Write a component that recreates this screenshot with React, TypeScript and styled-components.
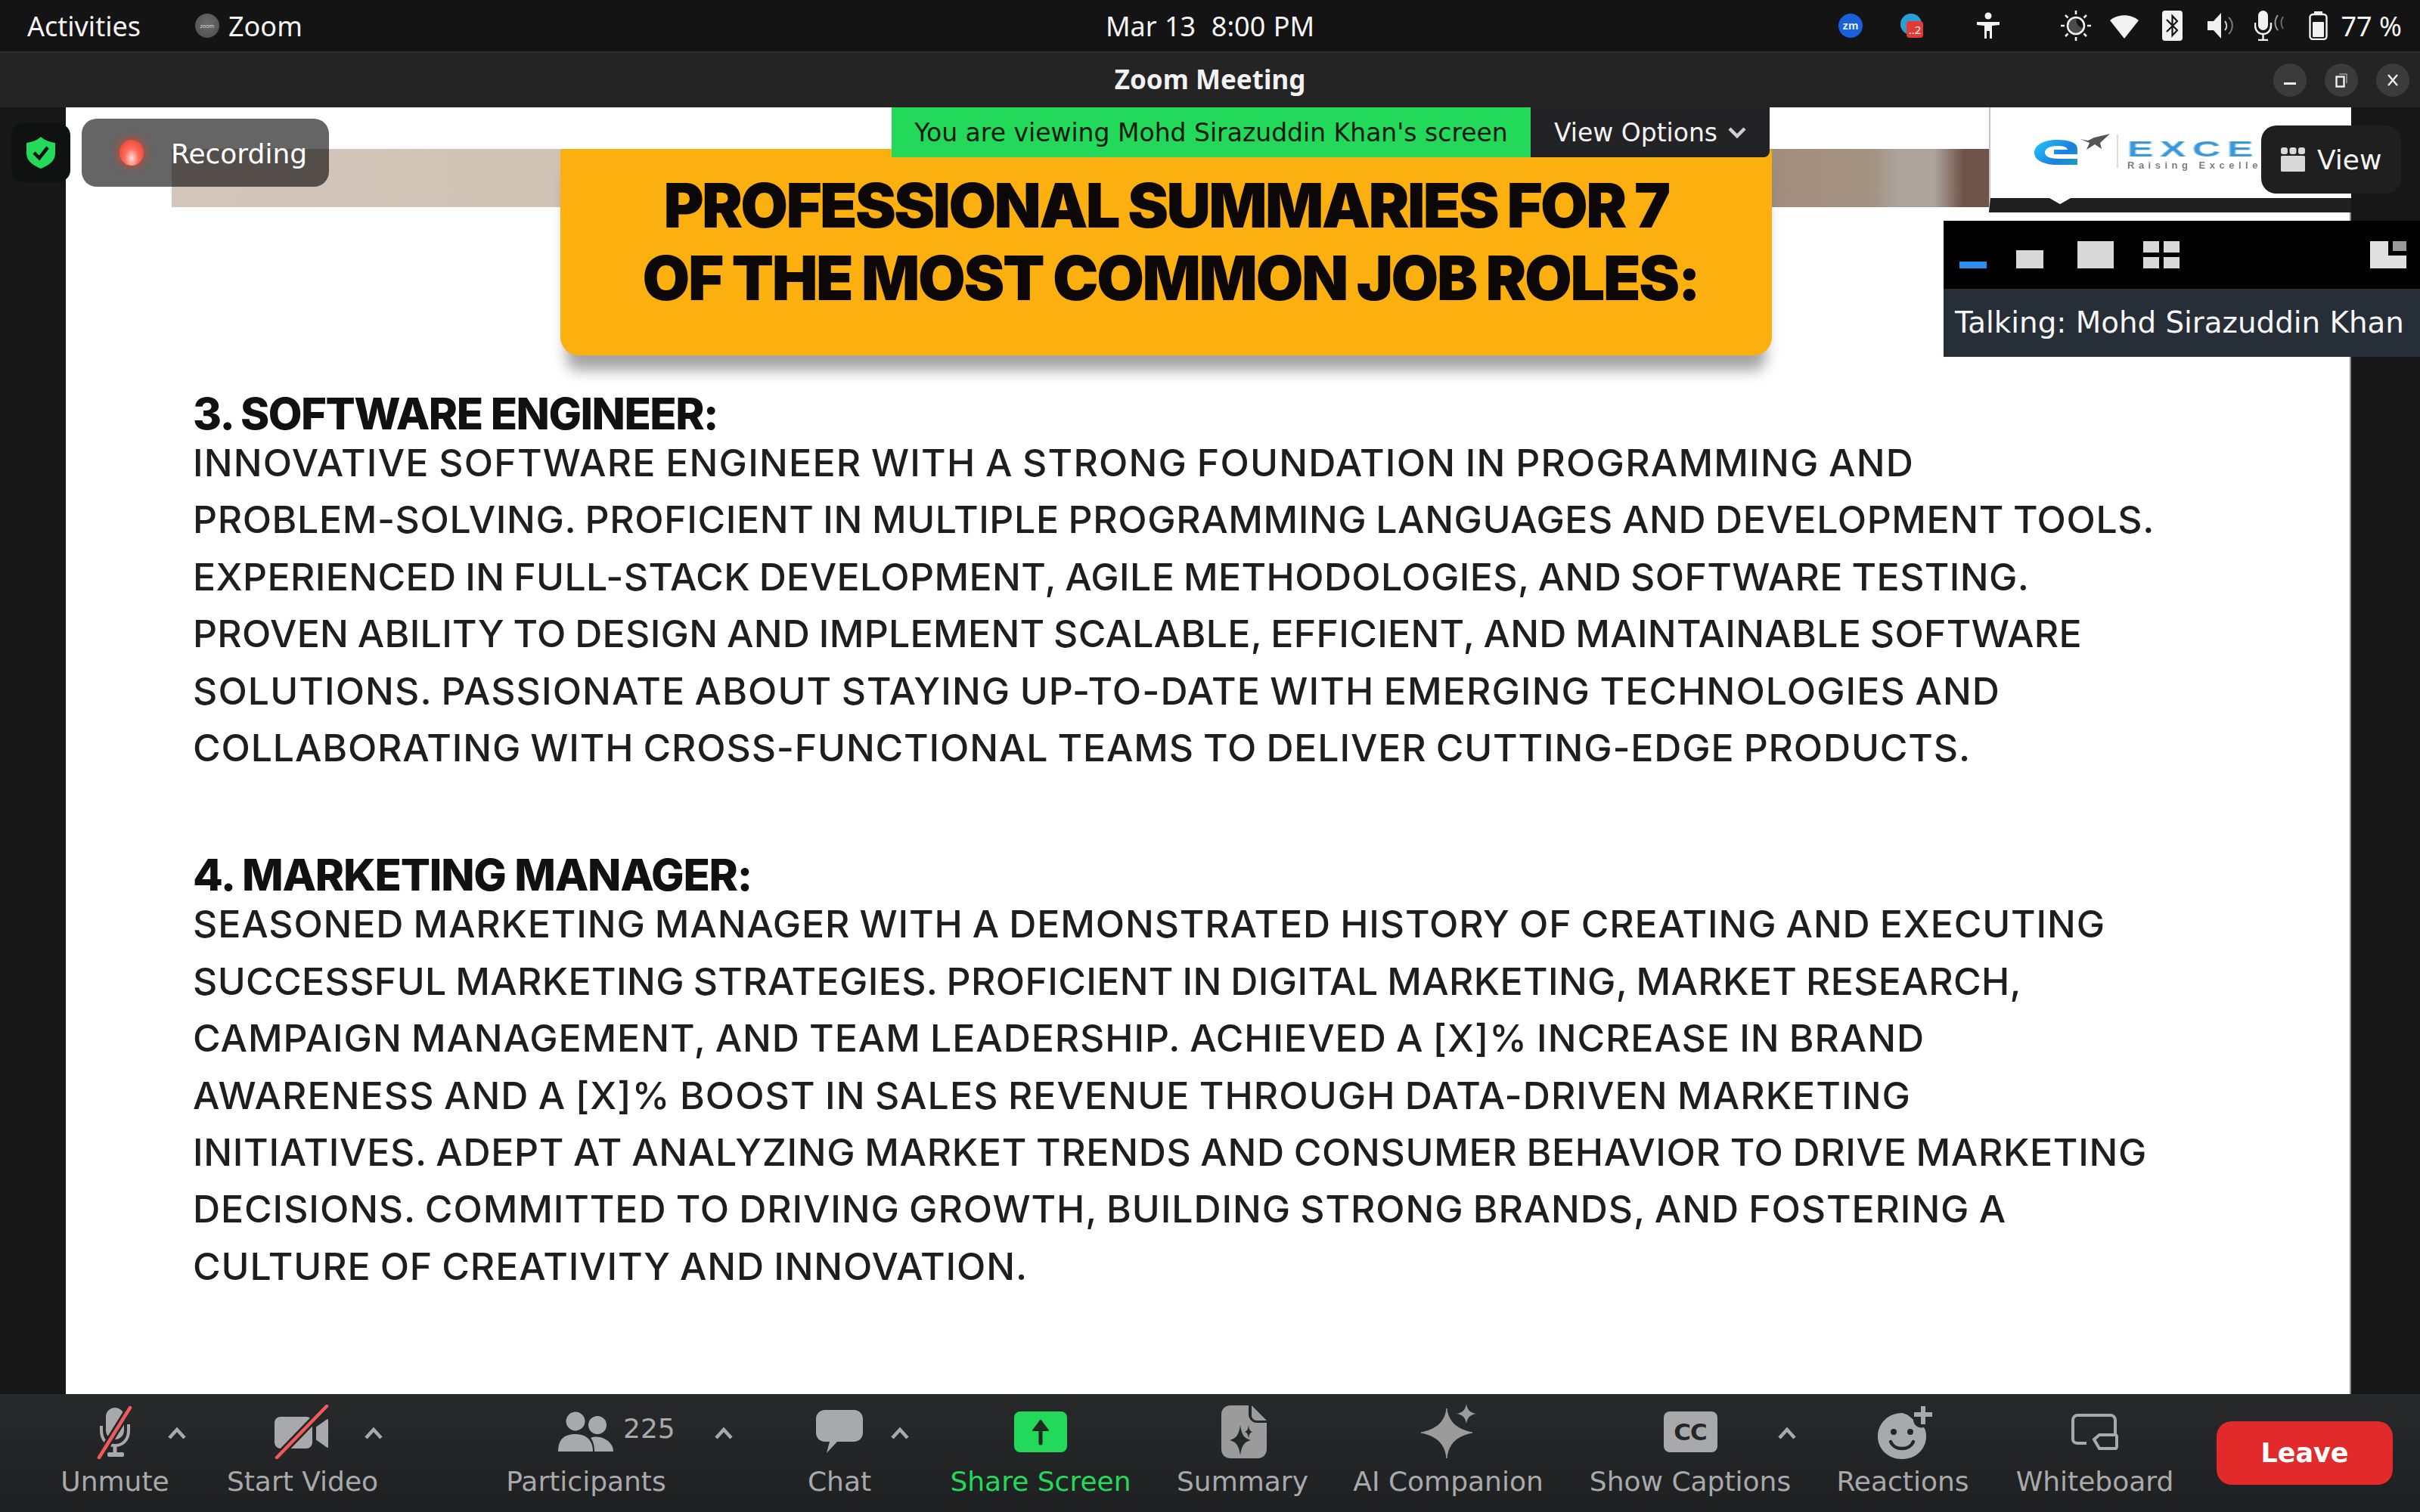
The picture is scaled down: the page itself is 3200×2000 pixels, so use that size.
import React, { useLayoutEffect, useRef } from "react";
import styled, { createGlobalStyle } from "styled-components";

const Global = createGlobalStyle`
  html, body { margin: 0; padding: 0; background: #141414; }
  * { box-sizing: border-box; }
`;

const UI = `"DejaVu Sans", "Liberation Sans", sans-serif`;
const SYS = `"Noto Sans", "Open Sans", sans-serif`;
const SLIDE = `Inter, "Open Sans", sans-serif`;

const Screen = styled.div`
  width: 3200px; height: 2000px; overflow: hidden;
  display: flex; flex-direction: column; background: #171717;
`;

/* ---------- GNOME top bar ---------- */
const TopBar = styled.header`
  height: 68px; flex: none; background: #141414; color: #f4f4f4;
  display: grid; grid-template-columns: 1fr auto 1fr; align-items: center;
  font-family: ${SYS}; font-size: 36px;
`;
const TopLeft = styled.div`display: flex; align-items: center; padding-left: 36px;`;
const AppDot = styled.span`
  width: 32px; height: 32px; border-radius: 50%; margin-left: 72px; margin-right: 12px;
  background: radial-gradient(circle at 50% 40%, #6c6c6c, #4b4b4b);
  color: #ddd; font-size: 7px; display: flex; align-items: center; justify-content: center;
`;
const Clock = styled.div`white-space: pre; word-spacing: 1px;`;
const Tray = styled.div`display: flex; align-items: center; justify-content: flex-end; padding-right: 24px;`;
const Slot = styled.span<{ $ml: number }>`
  margin-left: ${(p) => p.$ml}px; display: flex; align-items: center;
`;

/* ---------- title bar ---------- */
const TitleBar = styled.div`
  height: 74px; flex: none; background: #242424; border-top: 2px solid #2e2e2e;
  display: grid; grid-template-columns: 1fr auto 1fr; align-items: center;
  color: #f2f2f2; font-family: ${SYS}; font-size: 35px; font-weight: 700;
`;
const WinTitle = styled.span`grid-column: 2; margin-top: -4px;`;
const WinControls = styled.div`
  grid-column: 3; display: flex; justify-content: flex-end; gap: 24px; padding-right: 14px;
`;
const WinBtn = styled.span`
  width: 44px; height: 44px; border-radius: 50%; background: #3b3b3b;
  display: flex; align-items: center; justify-content: center;
`;

/* ---------- meeting stage ---------- */
const Stage = styled.main`
  position: relative; flex: 1; min-height: 0; display: flex; background: #171717;
`;
const Gutter = styled.div<{ $w: number }>`width: ${(p) => p.$w}px; flex: none; background: #171717;`;
const Slide = styled.section`
  flex: 1; background: #fff; padding-top: 55px; color: #1e1e1e; font-family: ${SLIDE};
  border-right: 2px solid #8a8a8a;
  > * { filter: blur(0.5px); }
`;
const BannerRow = styled.div`
  height: 273px; padding-left: 654px;
  background: linear-gradient(90deg, #d4c6ba 0, #d1c2b6 21%, #a08d7d 88%, #a39181 93.5%, #aca39b 95%, #aca39b 97%, #6e5448 98.6%, #6e5448 100%) no-repeat 140px 0 / 2403px 77px;
`;
const Banner = styled.div`
  width: 1602px; height: 273px; background: #fcb00f; border-radius: 4px 4px 24px 24px;
  box-shadow: 0 28px 18px -8px rgba(110, 110, 110, 0.62);
  display: flex; flex-direction: column; align-items: center; padding-top: 27px;
  color: #0c0808; font-weight: 900; font-size: 81px; line-height: 96px; word-spacing: -1px;
`;
const BannerShifted = styled.div`margin-left: 12px;`;
const Body = styled.div`padding: 49px 0 0 168px;`;
const Section = styled.div`& + & { margin-top: 102px; }`;
const Heading = styled.h2`
  margin: 0; font-size: 58px; line-height: 56px; font-weight: 800; color: #111;
`;
const Para = styled.div`font-size: 50px; line-height: 75.4px; font-weight: 500; word-spacing: -2px;`;
const FitSpan = styled.div`width: fit-content; white-space: nowrap;`;

const Fit = ({ w, children }: { w: number; children: string }) => {
  const ref = useRef<HTMLDivElement>(null);
  useLayoutEffect(() => {
    const el = ref.current;
    if (!el) return;
    el.style.letterSpacing = "0px";
    const cur = el.getBoundingClientRect().width;
    el.style.letterSpacing = `${(w - cur) / children.length}px`;
  }, [w, children]);
  return <FitSpan ref={ref}>{children}</FitSpan>;
};

const Shield = styled.div`
  position: absolute; left: 15px; top: 21px; width: 78px; height: 78px; border-radius: 16px;
  background: #101212; display: flex; align-items: center; justify-content: center;
`;
const RecPill = styled.div`
  position: absolute; left: 108px; top: 15px; width: 327px; height: 90px; border-radius: 20px;
  background: rgba(4, 4, 4, 0.61); color: #fff; font-family: ${UI}; font-size: 36px;
  display: flex; align-items: center; padding-left: 50px; gap: 36px;
`;
const RecText = styled.span`margin-top: 3px;`;
const RecDot = styled.span`
  width: 32px; height: 34px; border-radius: 50%;
  background: radial-gradient(ellipse at 50% 72%, #ffe0da 0, #ff6a5a 40%, #f04a38 78%, #a52a20 100%);
  box-shadow: 0 0 8px 4px rgba(220, 70, 40, 0.55);
`;
const ShareBar = styled.div`
  position: absolute; left: 1179px; top: 0; height: 66px; display: flex; font-family: ${UI}; font-size: 33px;
`;
const ShareNote = styled.div`
  width: 845px; background: #23d959; color: #0b1a0f; display: flex; align-items: center; justify-content: center;
`;
const ViewOptions = styled.div`
  width: 316px; background: #232326; color: #f3f3f3; border-radius: 0 0 8px 0;
  display: flex; align-items: center; justify-content: center; gap: 14px;
`;
const LogoBox = styled.div`
  position: absolute; left: 2630px; top: 0; width: 479px; height: 139px; background: #fff;
  border-left: 2px solid #cdbfbf; border-bottom: 19px solid #1f1f1f;
`;
const LogoMark = styled.svg`position: absolute; left: 55px; top: 30px; filter: blur(0.7px);`;
const LogoName = styled.div`
  position: absolute; left: 181px; top: 40px; font: 700 30px/30px "Liberation Sans", sans-serif;
  letter-spacing: 5px; color: #3a97d8; filter: blur(0.7px);
  transform: scaleX(1.72); transform-origin: 0 50%; white-space: nowrap;
`;
const LogoTag = styled.div`
  position: absolute; left: 181px; top: 70px;
  font: 700 13px/14px "Liberation Sans", sans-serif;
  letter-spacing: 5.5px; color: #7c7c7c; white-space: nowrap; filter: blur(0.5px);
`;
const Notch = styled.span`
  position: absolute; left: 78px; bottom: -8px; width: 0; height: 0;
  border: 14px solid transparent; border-bottom: 0; border-top: 8px solid #fff;
`;
const ViewBtn = styled.div`
  position: absolute; left: 2990px; top: 24px; width: 185px; height: 90px; border-radius: 20px;
  background: #1f1f1f; color: #f4f4f4; font-family: ${UI}; font-size: 36px;
  display: flex; align-items: center; padding-left: 26px; gap: 16px;
`;
const SpeakerPanel = styled.div`
  position: absolute; left: 2570px; top: 150px; width: 630px; height: 180px; font-family: ${UI};
  display: flex; flex-direction: column;
`;
const SizeRow = styled.div`
  height: 90px; background: #000; display: flex; align-items: flex-end; padding: 0 18px 27px 21px;
`;
const SizeIcon = styled.span<{ $ml?: number; $push?: boolean }>`
  display: flex; margin-left: ${(p) => (p.$push ? "auto" : `${p.$ml ?? 0}px`)};
`;
const Talking = styled.div`
  height: 90px; background: #262e38; color: #f6f6f6; font-size: 38.800px;
  display: flex; align-items: center; padding: 0 0 2px 15px; white-space: nowrap;
`;

/* ---------- bottom toolbar ---------- */
const Toolbar = styled.footer`
  height: 156px; flex: none; display: flex; padding-left: 40px;
  background: linear-gradient(180deg, #28292b, #1f2022);
  font-family: ${UI}; font-size: 36px; color: #a8a9ab;
`;
const Tool = styled.div<{ $w: number; $on?: boolean }>`
  position: relative; width: ${(p) => p.$w}px; flex: none; padding-top: 14px;
  display: flex; flex-direction: column; align-items: center;
  color: ${(p) => (p.$on ? "#23d959" : "inherit")};
`;
const ToolIcon = styled.div<{ $dx?: number }>`
  height: 72px; display: flex; align-items: center; justify-content: center;
  margin-left: ${(p) => p.$dx ?? 0}px;
`;
const ToolLabel = styled.div`margin-top: 10px; line-height: 40px; white-space: nowrap;`;
const Chevron = styled.svg<{ $dx: number }>`
  position: absolute; top: 44px; left: calc(50% + ${(p) => p.$dx}px); margin-left: -12px;
`;
const Count = styled.span`
  position: absolute; top: 26px; left: calc(50% + 49px); line-height: 40px;
`;
const CCBox = styled.span`
  width: 71px; height: 54px; border-radius: 8px; background: #a8a9ab; color: #25262a;
  font: 700 31px/54px ${UI}; text-align: center; letter-spacing: -1px;
`;
const LeaveBtn = styled.button`
  margin: 36px 0 0 43px; width: 233px; height: 84px; border: 0; border-radius: 20px;
  background: #e32a2a; color: #fff; font: 700 35px ${UI};
`;

/* ---------- icons ---------- */
const Slash = ({ d }: { d: string }) => (
  <>
    <path d={d} stroke="#26272a" strokeWidth="10" strokeLinecap="round" />
    <path d={d} stroke="#f25a5a" strokeWidth="4.5" strokeLinecap="round" />
  </>
);
const Caret = ({ dx }: { dx: number }) => (
  <Chevron $dx={dx} width="24" height="16" viewBox="0 0 24 16" fill="none">
    <path d="M2 14 L12 3 L22 14" stroke="#a8a9ab" strokeWidth="4.5" />
  </Chevron>
);
const G = "#a8a9ab";
const G2 = "#9b9b9b";

const MicIcon = () => (
  <svg width="60" height="72" viewBox="0 0 60 72" fill="none">
    <rect x="18" y="4" width="24" height="42" rx="12" fill={G} />
    <path d="M12 28 v6 c0 13 8 20 18 20 s18 -7 18 -20 v-8" stroke={G} strokeWidth="4" />
    <path d="M30 54 v12" stroke={G} strokeWidth="5" />
    <rect x="20" y="63" width="22" height="6" rx="2" fill={G} />
    <Slash d="M50 4 L9 70" />
  </svg>
);
const VideoIcon = () => (
  <svg width="74" height="72" viewBox="0 0 74 72" fill="none">
    <rect x="0" y="16" width="50" height="42" rx="8" fill={G} />
    <path d="M56 30 L70 20 V56 L56 46 Z" fill={G} stroke={G} strokeWidth="2" strokeLinejoin="round" />
    <Slash d="M69 2 L3 70" />
  </svg>
);
const PeopleIcon = () => (
  <svg width="76" height="54" viewBox="0 0 76 54">
    <ellipse cx="24" cy="13" rx="12.5" ry="12.5" fill={G} />
    <ellipse cx="53" cy="18" rx="12" ry="12" fill={G} />
    <path d="M1 53 C1 36 10 30 24 30 C37 30 47 37 47 53 Z" fill={G} />
    <path d="M49 53 C49 44 47 39 44 35 C49 33 56 33 62 36 C70 40 74 46 74 53 Z" fill={G} />
  </svg>
);
const ChatIcon = () => (
  <svg width="62" height="58" viewBox="0 0 62 58">
    <path d="M12 0 H50 C57 0 62 5 62 12 V30 C62 37 57 42 50 42 H28 L14 57 L18 42 H12 C5 42 0 37 0 30 V12 C0 5 5 0 12 0 Z" fill={G} />
  </svg>
);
const ShareIcon = () => (
  <svg width="70" height="54" viewBox="0 0 70 54">
    <rect width="70" height="54" rx="8" fill="#23d959" />
    <path d="M35 42 V14" stroke="#1f2a22" strokeWidth="5" strokeLinecap="round" />
    <path d="M25 25 L35 12 L45 25 Z" fill="#1f2a22" stroke="#1f2a22" strokeWidth="2" strokeLinejoin="round" />
  </svg>
);
const Star4 = ({ cx, cy, rx, ry, fill }: { cx: number; cy: number; rx: number; ry: number; fill: string }) => (
  <path
    fill={fill}
    d={`M${cx} ${cy - ry} C${cx + rx * 0.12} ${cy - ry * 0.35} ${cx + rx * 0.4} ${cy - ry * 0.1} ${cx + rx} ${cy} C${cx + rx * 0.4} ${cy + ry * 0.1} ${cx + rx * 0.12} ${cy + ry * 0.35} ${cx} ${cy + ry} C${cx - rx * 0.12} ${cy + ry * 0.35} ${cx - rx * 0.4} ${cy + ry * 0.1} ${cx - rx} ${cy} C${cx - rx * 0.4} ${cy - ry * 0.1} ${cx - rx * 0.12} ${cy - ry * 0.35} ${cx} ${cy - ry} Z`}
  />
);
const SummaryIcon = () => (
  <svg width="60" height="70" viewBox="0 0 60 70">
    <path d="M12 0 H36 V12 C36 18 41 23 47 23 H60 V58 C60 65 55 70 48 70 H12 C5 70 0 65 0 58 V12 C0 5 5 0 12 0 Z" fill={G2} />
    <path d="M40 0 L60 20 H47 C43 20 40 17 40 13 Z" fill={G2} />
    <Star4 cx={25} cy={46} rx={14} ry={20} fill="#26272a" />
    <Star4 cx={36} cy={35} rx={5} ry={9} fill="#26272a" />
  </svg>
);
const AiIcon = () => (
  <svg width="76" height="74" viewBox="0 0 76 74">
    <path
      fill={G2}
      d="M34 6 C36 24 48 34 68 38 C48 42 36 52 34 72 C32 52 20 42 0 38 C20 34 32 24 34 6 Z"
      stroke={G2} strokeWidth="1" strokeLinejoin="round"
    />
    <Star4 cx={60} cy={13} rx={13} ry={13} fill={G2} />
  </svg>
);
const FaceIcon = () => (
  <svg width="74" height="74" viewBox="0 0 74 74" fill="none">
    <path d="M32 13 C14 13 0 27 0 44 C0 61 14 74 32 74 C50 74 64 61 64 44 C64 39 63 35 61 32 C54 34 47 29 47 22 C42 17 38 14 32 13 Z" fill={G} transform="translate(0 -1)" />
    <path d="M60 3 V27 M48 14 H72" stroke={G} strokeWidth="6" />
    <circle cx="21" cy="37" r="4" fill="#25262a" />
    <circle cx="43" cy="37" r="4" fill="#25262a" />
    <path d="M17 50 C22 62 42 62 47 50" stroke="#25262a" strokeWidth="4.5" strokeLinecap="round" />
  </svg>
);
const BoardIcon = () => (
  <svg width="62" height="48" viewBox="0 0 62 48" fill="none">
    <path d="M20 39 H8 C5 39 2 37 2 34 V8 C2 5 5 2 8 2 H52 C55 2 58 5 58 8 V28" stroke={G} strokeWidth="4" />
    <path d="M30 34 L37 28 H58 C60 28 60 30 60 31 V43 C60 45 59 46 58 46 H37 Z" stroke={G} strokeWidth="4" />
  </svg>
);
const Bar = ({ w, h, fill = "#d9d9d9" }: { w: number; h: number; fill?: string }) => (
  <svg width={w} height={h}><rect width={w} height={h} fill={fill} /></svg>
);

const softwareLines: [string, number][] = [
  ["INNOVATIVE SOFTWARE ENGINEER WITH A STRONG FOUNDATION IN PROGRAMMING AND", 2276],
  ["PROBLEM-SOLVING. PROFICIENT IN MULTIPLE PROGRAMMING LANGUAGES AND DEVELOPMENT TOOLS.", 2594],
  ["EXPERIENCED IN FULL-STACK DEVELOPMENT, AGILE METHODOLOGIES, AND SOFTWARE TESTING.", 2427],
  ["PROVEN ABILITY TO DESIGN AND IMPLEMENT SCALABLE, EFFICIENT, AND MAINTAINABLE SOFTWARE", 2498],
  ["SOLUTIONS. PASSIONATE ABOUT STAYING UP-TO-DATE WITH EMERGING TECHNOLOGIES AND", 2390],
  ["COLLABORATING WITH CROSS-FUNCTIONAL TEAMS TO DELIVER CUTTING-EDGE PRODUCTS.", 2351],
];
const marketingLines: [string, number][] = [
  ["SEASONED MARKETING MANAGER WITH A DEMONSTRATED HISTORY OF CREATING AND EXECUTING", 2529],
  ["SUCCESSFUL MARKETING STRATEGIES. PROFICIENT IN DIGITAL MARKETING, MARKET RESEARCH,", 2418],
  ["CAMPAIGN MANAGEMENT, AND TEAM LEADERSHIP. ACHIEVED A [X]% INCREASE IN BRAND", 2290],
  ["AWARENESS AND A [X]% BOOST IN SALES REVENUE THROUGH DATA-DRIVEN MARKETING", 2272],
  ["INITIATIVES. ADEPT AT ANALYZING MARKET TRENDS AND CONSUMER BEHAVIOR TO DRIVE MARKETING", 2584],
  ["DECISIONS. COMMITTED TO DRIVING GROWTH, BUILDING STRONG BRANDS, AND FOSTERING A", 2398],
  ["CULTURE OF CREATIVITY AND INNOVATION.", 1104],
];

export default function App() {
  return (
    <Screen>
      <Global />
      <TopBar>
        <TopLeft>
          Activities
          <AppDot>zoom</AppDot>
          Zoom
        </TopLeft>
        <Clock>{"Mar 13  8:00 PM"}</Clock>
        <Tray>
          <Slot $ml={0}>
            <svg width="32" height="32" viewBox="0 0 32 32">
              <circle cx="16" cy="16" r="16" fill="#1a5fdc" />
              <text x="16" y="21" textAnchor="middle" fontSize="15" fontFamily="Liberation Sans" fontWeight="700" fill="#e8f0ff">zm</text>
            </svg>
          </Slot>
          <Slot $ml={50}>
            <svg width="30" height="32" viewBox="0 0 30 32">
              <circle cx="14" cy="14" r="14" fill="#2a9fd6" />
              <rect x="8" y="10" width="22" height="22" rx="4" fill="#e53935" />
              <text x="19" y="27" textAnchor="middle" fontSize="15" fontFamily="Noto Sans" fill="#fff">..2</text>
            </svg>
          </Slot>
          <Slot $ml={71}>
            <svg width="30" height="36" viewBox="0 0 30 36" fill="#f2f2f2">
              <circle cx="15" cy="5" r="4.5" />
              <path d="M0 13 H30 V17 L20 18 V35 H17 V25 H13 V35 H10 V18 L0 17 Z" />
            </svg>
          </Slot>
          <Slot $ml={81}>
            <svg width="40" height="40" viewBox="0 0 40 40" fill="none" stroke="#f0f0f0" strokeWidth="2.6">
              <circle cx="20" cy="20" r="11" />
              <path d="M21 10 a10 10 0 1 0 9 13 a10 10 0 0 1 -9 -13 Z" fill="#f0f0f0" stroke="none" opacity="0.25" />
              <path d="M20 0 v5 M20 35 v5 M0 20 h5 M35 20 h5 M6 6 l3.5 3.5 M30.5 30.5 l3.5 3.5 M6 34 l3.5 -3.5 M30.5 9.5 l3.5 -3.5" />
            </svg>
          </Slot>
          <Slot $ml={25}>
            <svg width="38" height="33" viewBox="0 0 38 33"><path d="M0 9 C10 0 28 0 38 9 L19 33 Z" fill="#f2f2f2" /></svg>
          </Slot>
          <Slot $ml={31}>
            <svg width="27" height="40" viewBox="0 0 27 40" fill="none">
              <rect width="27" height="40" rx="4" fill="#f2f2f2" />
              <path d="M6 12 L20 26 L13.5 33 V7 L20 14 L6 28" stroke="#141414" strokeWidth="2.2" />
            </svg>
          </Slot>
          <Slot $ml={33}>
            <svg width="36" height="34" viewBox="0 0 36 34" fill="none">
              <path d="M0 11 H8 L18 0 V34 L8 23 H0 Z" fill="#f0f0f0" />
              <path d="M23 11 a9 9 0 0 1 0 12" stroke="#cfcfcf" strokeWidth="2" />
              <path d="M28 6 a15 15 0 0 1 0 22" stroke="#7a7a7a" strokeWidth="2" />
            </svg>
          </Slot>
          <Slot $ml={26}>
            <svg width="40" height="40" viewBox="0 0 40 40" fill="none">
              <rect x="5" y="0" width="13" height="26" rx="6.5" fill="#f2f2f2" />
              <path d="M1 16 v4 c0 7 5 11 10.500 11 s10.500 -4 10.500 -11 v-4 M11.500 31 v7 M5 39 h13" stroke="#f2f2f2" strokeWidth="2.4" />
              <path d="M31 6 a16 16 0 0 0 0 20" stroke="#9a9a9a" strokeWidth="2" />
              <path d="M38 8 a14 14 0 0 0 0 16" stroke="#6a6a6a" strokeWidth="2" />
            </svg>
          </Slot>
          <Slot $ml={32}>
            <svg width="25" height="38" viewBox="0 0 25 38" fill="none">
              <rect x="1.500" y="4" width="22" height="33" rx="4" stroke="#f2f2f2" strokeWidth="2.4" />
              <rect x="7" y="0" width="11" height="4" fill="#f2f2f2" />
              <rect x="5" y="14" width="15" height="20" rx="1" fill="#f2f2f2" />
            </svg>
          </Slot>
          <Slot $ml={18}>77 %</Slot>
        </Tray>
      </TopBar>

      <TitleBar>
        <WinTitle>Zoom Meeting</WinTitle>
        <WinControls>
          <WinBtn>
            <svg width="16" height="16" viewBox="0 0 16 16"><rect y="11" width="16" height="3" fill="#efefef" /></svg>
          </WinBtn>
          <WinBtn>
            <svg width="16" height="20" viewBox="0 0 16 20" fill="none">
              <rect x="1.500" y="5.500" width="10" height="13" stroke="#efefef" strokeWidth="2.400" />
              <path d="M5 2 H15 V14" stroke="#9a9a9a" strokeWidth="1.500" />
            </svg>
          </WinBtn>
          <WinBtn>
            <svg width="18" height="18" viewBox="0 0 18 18"><path d="M3 2 L15 16 M15 2 L3 16" stroke="#efefef" strokeWidth="2.400" /></svg>
          </WinBtn>
        </WinControls>
      </TitleBar>

      <Stage>
        <Gutter $w={87} />
        <Slide>
          <BannerRow>
            <Banner>
              <Fit w={1329}>PROFESSIONAL SUMMARIES FOR 7</Fit>
              <BannerShifted><Fit w={1397}>OF THE MOST COMMON JOB ROLES:</Fit></BannerShifted>
            </Banner>
          </BannerRow>
          <Body>
            <Section>
              <Heading><Fit w={694}>3. SOFTWARE ENGINEER:</Fit></Heading>
              <Para>{softwareLines.map(([t, w]) => <Fit key={t} w={w}>{t}</Fit>)}</Para>
            </Section>
            <Section>
              <Heading><Fit w={739}>4. MARKETING MANAGER:</Fit></Heading>
              <Para>{marketingLines.map(([t, w]) => <Fit key={t} w={w}>{t}</Fit>)}</Para>
            </Section>
          </Body>
        </Slide>
        <Gutter $w={91} />

        <Shield>
          <svg width="38" height="42" viewBox="0 0 38 42">
            <path d="M19 0 C25 5 31 7 38 8 V22 C38 32 29 38 19 42 C9 38 0 32 0 22 V8 C7 7 13 5 19 0 Z" fill="#23d959" />
            <path d="M10 21 L17 28 L28 14" fill="none" stroke="#101212" strokeWidth="4.500" />
          </svg>
        </Shield>
        <RecPill><RecDot /><RecText>Recording</RecText></RecPill>
        <ShareBar>
          <ShareNote>You are viewing Mohd Sirazuddin Khan's screen</ShareNote>
          <ViewOptions>
            View Options
            <svg width="24" height="16" viewBox="0 0 24 16" fill="none"><path d="M2 3 L12 13 L22 3" stroke="#cfcfcf" strokeWidth="4.500" /></svg>
          </ViewOptions>
        </ShareBar>
        <LogoBox>
          <LogoMark width="120" height="60" viewBox="0 0 120 60" fill="none">
            <defs>
              <linearGradient id="logoE" x1="0" y1="0.2" x2="1" y2="0.8">
                <stop offset="0" stopColor="#1fc0fb" />
                <stop offset="0.65" stopColor="#1b7fdf" />
                <stop offset="1" stopColor="#1a9ac0" />
              </linearGradient>
            </defs>
            <path d="M60 32 V25 C60 16 48 13 33 13 C15 13 3 20 3 30 C3 40 16 46 33 46 H60 V38 H36 C24 38 17 35 17 30 C17 24 24 21 33 21 C41 21 46 22 47 26 H29 V32 Z" fill="url(#logoE)" />
            <path d="M64 12 L74 14 L82 10 L103 5 L90 17 L92 25 L83 19 L72 26 L76 17 Z" fill="#555" />
            <path d="M113 6 V50" stroke="#dcdcdc" strokeWidth="2" />
          </LogoMark>
          <LogoName>EXCEL</LogoName>
          <LogoTag>Raising Excellence</LogoTag>
          <Notch />
        </LogoBox>
        <ViewBtn>
          <svg width="32" height="32" viewBox="0 0 32 32" fill="#d9d9d9">
            <rect x="0" y="0" width="9" height="9" rx="3" />
            <rect x="11.500" y="0" width="9" height="9" rx="3" />
            <rect x="23" y="0" width="9" height="9" rx="3" />
            <rect x="0" y="11" width="32" height="21" rx="1.500" />
          </svg>
          View
        </ViewBtn>
        <SpeakerPanel>
          <SizeRow>
            <Bar w={36} h={9} fill="#2a8ff0" />
            <SizeIcon $ml={39}><Bar w={36} h={24} /></SizeIcon>
            <SizeIcon $ml={45}><Bar w={48} h={36} /></SizeIcon>
            <SizeIcon $ml={39}>
              <svg width="48" height="36" fill="#d9d9d9">
                <rect width="21" height="15" /><rect x="27" width="21" height="15" />
                <rect y="21" width="21" height="15" /><rect x="27" y="21" width="21" height="15" />
              </svg>
            </SizeIcon>
            <SizeIcon $push>
              <svg width="48" height="36">
                <path d="M0 0 H24 V19 H48 V36 H0 Z" fill="#e0e0e0" />
                <rect x="30" width="18" height="13" fill="#9a9a9a" />
              </svg>
            </SizeIcon>
          </SizeRow>
          <Talking>Talking: Mohd Sirazuddin Khan</Talking>
        </SpeakerPanel>
      </Stage>

      <Toolbar>
        <Tool $w={224}>
          <ToolIcon><MicIcon /></ToolIcon>
          <ToolLabel>Unmute</ToolLabel>
          <Caret dx={82} />
        </Tool>
        <Tool $w={272}>
          <ToolIcon><VideoIcon /></ToolIcon>
          <ToolLabel>Start Video</ToolLabel>
          <Caret dx={94} />
        </Tool>
        <Tool $w={478}>
          <ToolIcon><PeopleIcon /></ToolIcon>
          <ToolLabel>Participants</ToolLabel>
          <Count>225</Count>
          <Caret dx={182} />
        </Tool>
        <Tool $w={192}>
          <ToolIcon><ChatIcon /></ToolIcon>
          <ToolLabel>Chat</ToolLabel>
          <Caret dx={80} />
        </Tool>
        <Tool $w={340} $on>
          <ToolIcon><ShareIcon /></ToolIcon>
          <ToolLabel>Share Screen</ToolLabel>
        </Tool>
        <Tool $w={194}>
          <ToolIcon $dx={3}><SummaryIcon /></ToolIcon>
          <ToolLabel>Summary</ToolLabel>
        </Tool>
        <Tool $w={350}>
          <ToolIcon $dx={4}><AiIcon /></ToolIcon>
          <ToolLabel>AI Companion</ToolLabel>
        </Tool>
        <Tool $w={290}>
          <ToolIcon><CCBox>CC</CCBox></ToolIcon>
          <ToolLabel>Show Captions</ToolLabel>
          <Caret dx={128} />
        </Tool>
        <Tool $w={272}>
          <ToolIcon $dx={8}><FaceIcon /></ToolIcon>
          <ToolLabel>Reactions</ToolLabel>
        </Tool>
        <Tool $w={236}>
          <ToolIcon><BoardIcon /></ToolIcon>
          <ToolLabel>Whiteboard</ToolLabel>
        </Tool>
        <LeaveBtn>Leave</LeaveBtn>
      </Toolbar>
    </Screen>
  );
}
